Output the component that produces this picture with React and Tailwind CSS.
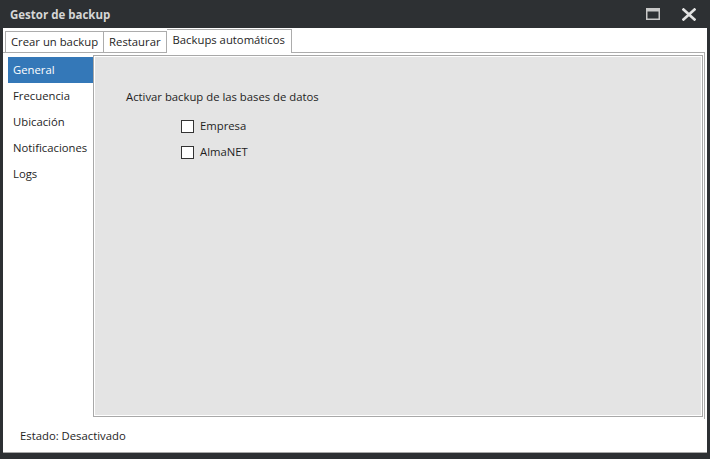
export default function App() {
  const font = "font-['Open_Sans','Noto_Sans',sans-serif]";
  const sideItems = ["General", "Frecuencia", "Ubicación", "Notificaciones", "Logs"];
  return (
    <div className={`w-[710px] h-[459px] bg-[#2d3033] flex flex-col ${font} text-[11.3px] text-[#1e1e1e] overflow-hidden`}>
      {/* title bar */}
      <div className="h-[28px] flex items-center pl-[10px] pr-[14px] shrink-0">
        <div className="text-[11.5px] font-bold text-[#d6d6d6] flex-1 pt-px">Gestor de backup</div>
        <svg width="14" height="12" viewBox="0 0 14 12" className="mr-[22px]">
          <rect x="0.75" y="0.75" width="12.5" height="10.5" fill="none" stroke="#c8c8c8" strokeWidth="1.5" />
          <rect x="0" y="0" width="14" height="3.5" fill="#c8c8c8" />
        </svg>
        <svg width="14" height="13" viewBox="0 0 14 13">
          <path d="M1.5 1.5 L12.5 11.5 M12.5 1.5 L1.5 11.5" stroke="#e2e2e2" strokeWidth="2.6" strokeLinecap="square" />
        </svg>
      </div>
      {/* window body */}
      <div className="mx-[3px] h-[425px] bg-white border-b border-[#a8a8a8] flex flex-col">
        {/* tabs */}
        <div className="flex items-end h-[24px] pl-[2px] relative z-10">
          <div className="h-[21px] px-[5px] border border-b-0 border-[#acacac] bg-white flex items-center">Crear un backup</div>
          <div className="h-[21px] px-[5px] border border-b-0 border-l-0 border-[#acacac] bg-white flex items-center">Restaurar</div>
          <div className="h-[24px] px-[6px] border border-b-0 border-l-0 border-[#acacac] bg-white flex items-center -mb-px pb-[2px]">Backups automáticos</div>
        </div>
        {/* tab panel */}
        <div className="border-t border-r border-[#acacac] mr-[2px] flex pt-[2px] h-[367px]">
          <div className="w-[90px] pl-[5px] pt-[2px] flex flex-col shrink-0">
            {sideItems.map((s, i) => (
              <div
                key={s}
                className={`h-[26px] flex items-center pl-[5px] ${i === 0 ? "bg-[#3478b8] text-white" : "text-[#1e1e1e]"}`}
              >
                {s}
              </div>
            ))}
          </div>
          <div className="flex-1 border border-[#a8a8a8] p-px mr-px mb-[2px]">
            <div className="w-full h-full bg-[#e4e4e4] pt-[32px] pl-[31px]">
              <div className="h-[16px] flex items-center">Activar backup de las bases de datos</div>
              <div className="pl-[55px] pt-[13px] flex flex-col gap-[9px]">
                {["Empresa", "AlmaNET"].map((c) => (
                  <div key={c} className="flex items-center h-[17px]">
                    <div className="w-[13px] h-[13px] border border-[#333] bg-white mr-[6px]" />
                    <span>{c}</span>
                  </div>
                ))}
              </div>
            </div>
          </div>
        </div>
        <div className="flex-1 flex items-center pl-[17px] pt-[1px]">Estado: Desactivado</div>
      </div>
    </div>
  );
}
